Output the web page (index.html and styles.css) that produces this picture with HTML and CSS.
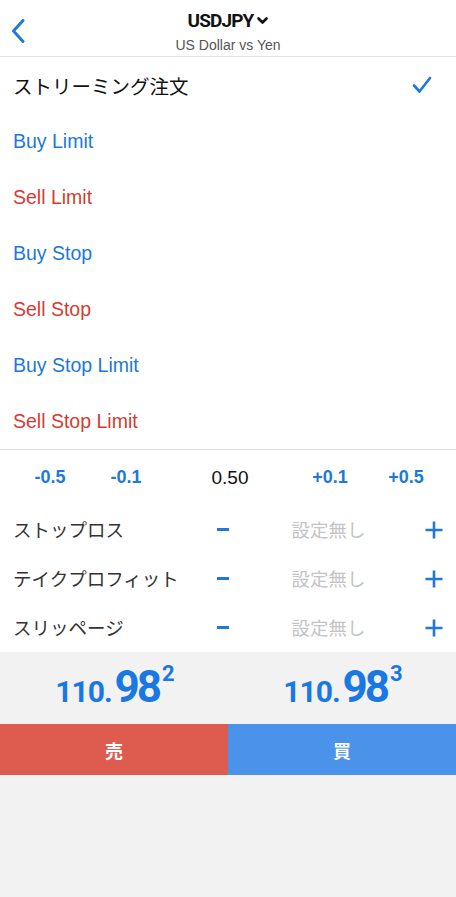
FILE: index.html
```html
<!DOCTYPE html>
<html lang="ja">
<head>
<meta charset="utf-8">
<title>USDJPY</title>
<link rel="stylesheet" href="styles.css">
</head>
<body>
<div class="screen">
  <header class="nav">
    <button class="back" aria-label="戻る">
      <svg width="14" height="24" viewBox="0 0 14 24"><polyline points="12,1.5 2.5,12 12,22.5" fill="none" stroke="currentColor" stroke-width="3" stroke-linecap="round" stroke-linejoin="round"/></svg>
    </button>
    <div class="title">
      <div class="symbol">USDJPY<svg class="caret" width="11" height="8" viewBox="0 0 11 8"><polyline points="1.5,1.5 5.5,5.5 9.5,1.5" fill="none" stroke="currentColor" stroke-width="2.6" stroke-linecap="round" stroke-linejoin="round"/></svg></div>
      <div class="desc">US Dollar vs Yen</div>
    </div>
  </header>

  <ul class="types">
    <li class="type current">ストリーミング注文<svg class="check" width="20" height="18" viewBox="0 0 20 18"><polyline points="2,9.5 7.5,15.5 18,2" fill="none" stroke="currentColor" stroke-width="2.6" stroke-linecap="round" stroke-linejoin="round"/></svg></li>
    <li class="type buy">Buy Limit</li>
    <li class="type sell">Sell Limit</li>
    <li class="type buy">Buy Stop</li>
    <li class="type sell">Sell Stop</li>
    <li class="type buy">Buy Stop Limit</li>
    <li class="type sell">Sell Stop Limit</li>
  </ul>

  <section class="params">
    <div class="lots">
      <span class="step">-0.5</span>
      <span class="step">-0.1</span>
      <span class="volume">0.50</span>
      <span class="step">+0.1</span>
      <span class="step">+0.5</span>
    </div>
    <div class="param">
      <span class="label">ストップロス</span>
      <span class="minus"></span>
      <span class="value">設定無し</span>
      <svg class="plus" width="18" height="18" viewBox="0 0 18 18"><path d="M9 0.5V17.5M0.5 9H17.5" stroke="currentColor" stroke-width="2.6"/></svg>
    </div>
    <div class="param">
      <span class="label">テイクプロフィット</span>
      <span class="minus"></span>
      <span class="value">設定無し</span>
      <svg class="plus" width="18" height="18" viewBox="0 0 18 18"><path d="M9 0.5V17.5M0.5 9H17.5" stroke="currentColor" stroke-width="2.6"/></svg>
    </div>
    <div class="param">
      <span class="label">スリッページ</span>
      <span class="minus"></span>
      <span class="value">設定無し</span>
      <svg class="plus" width="18" height="18" viewBox="0 0 18 18"><path d="M9 0.5V17.5M0.5 9H17.5" stroke="currentColor" stroke-width="2.6"/></svg>
    </div>
  </section>

  <section class="trade">
    <div class="prices">
      <div class="price"><span class="lead">110.</span><span class="big">98</span><span class="pip">2</span></div>
      <div class="price"><span class="lead">110.</span><span class="big">98</span><span class="pip">3</span></div>
    </div>
    <div class="actions">
      <button class="action sell-btn">売</button>
      <button class="action buy-btn">買</button>
    </div>
  </section>
</div>
</body>
</html>
```

FILE: styles.css
```css
* { box-sizing: border-box; }

html, body {
  margin: 0;
  padding: 0;
}

body {
  font-family: "Liberation Sans", "Noto Sans CJK JP", sans-serif;
  background: #f2f2f2;
  color: #111;
}

.screen {
  width: 456px;
  min-height: 897px;
  display: flex;
  flex-direction: column;
  background: #f2f2f2;
}

/* header */
.nav {
  height: 57px;
  background: #fff;
  border-bottom: 1px solid #e4e4e4;
  display: flex;
  align-items: center;
  justify-content: center;
  position: relative;
}

.back {
  position: absolute;
  left: 11px;
  top: 19px;
  border: 0;
  padding: 0;
  background: none;
  color: #2079d8;
  display: flex;
}

.title {
  display: flex;
  flex-direction: column;
  align-items: center;
  padding-top: 8px;
}

.symbol {
  font-family: Roboto, "Liberation Sans", sans-serif;
  font-weight: 700;
  font-size: 19px;
  letter-spacing: -0.9px;
  line-height: 22px;
  color: #111;
  display: flex;
  align-items: center;
  gap: 4px;
}

.caret { margin-top: 1px; }

.desc {
  font-size: 14px;
  line-height: 20px;
  color: #555;
  margin-top: 3px;
}

/* order types */
.types {
  list-style: none;
  margin: 0;
  padding: 0;
  background: #fff;
  border-bottom: 1px solid #e4e4e4;
}

.type {
  height: 56px;
  display: flex;
  align-items: center;
  justify-content: space-between;
  padding: 0 24px 0 13px;
  font-size: 19.5px;
}

.type.current { color: #111; }
.type.buy { color: #2079d8; }
.type.sell { color: #d23d31; }

.check { color: #2079d8; }

/* parameters */
.params {
  background: #fff;
}

.lots {
  height: 55px;
  display: grid;
  grid-template-columns: 76px 76px 1fr 76px 76px;
  padding: 0 12px;
  align-items: center;
  justify-items: center;
}

.step {
  font-size: 18px;
  font-weight: 700;
  color: #2079d8;
}

.volume {
  font-size: 19px;
  color: #111;
  padding-left: 4px;
}

.param {
  height: 49px;
  display: grid;
  grid-template-columns: 195px 30px 1fr 30px;
  align-items: center;
  justify-items: center;
  padding: 0 7px 0 13px;
}

.label {
  justify-self: start;
  font-family: "Noto Sans CJK JP", sans-serif;
  font-size: 18.5px;
  line-height: 24px;
  color: #333;
  margin-top: -2px;
}

.minus {
  width: 12px;
  height: 3px;
  background: #2079d8;
}

.value {
  font-family: "Noto Sans CJK JP", sans-serif;
  font-size: 18.5px;
  line-height: 24px;
  color: #c4c4c4;
  margin-top: -2px;
}

.plus { color: #2079d8; }

/* trade */
.trade {
  background: #f2f2f2;
}

.prices {
  height: 72px;
  display: grid;
  grid-template-columns: 1fr 1fr;
  align-items: center;
}

.price {
  display: flex;
  justify-content: center;
  align-items: baseline;
  font-family: Roboto, "Liberation Sans", sans-serif;
  font-weight: 700;
  color: #1a78e4;
  line-height: 1;
  padding-left: 2px;
  margin-top: -3px;
}

.lead {
  font-size: 30px;
  letter-spacing: -1px;
}

.big {
  font-size: 44px;
  letter-spacing: -3px;
  margin-left: 3px;
}

.pip {
  font-size: 22px;
  align-self: flex-start;
  margin-left: 3px;
  margin-top: -2px;
}

.actions {
  display: grid;
  grid-template-columns: 1fr 1fr;
  height: 51px;
}

.action {
  border: 0;
  margin: 0;
  font-family: "Noto Sans CJK JP", sans-serif;
  font-size: 18px;
  font-weight: 700;
  color: #fff;
}

.sell-btn { background: #de5b4f; }
.buy-btn { background: #4a92ea; }
```
